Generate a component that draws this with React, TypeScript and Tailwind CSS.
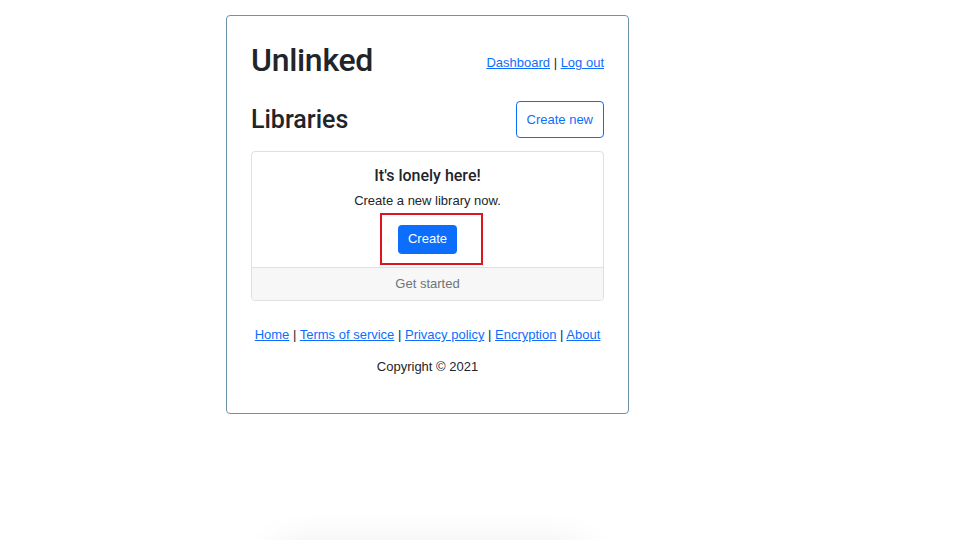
import React from 'react'

const footerLinks = ['Home', 'Terms of service', 'Privacy policy', 'Encryption', 'About']

const App = () => {
  return (
    <div className="min-h-[540px] w-full bg-white font-['Liberation_Sans',Arial,sans-serif] text-[#212529]">
      {/* main card */}
      <div className="ml-[226px] pt-[15px]">
        <div className="w-[403px] h-[399px] rounded-[4px] border border-[#6d93ac] px-6 pt-[24px]">
          {/* header */}
          <div className="flex items-center justify-between h-[40px]">
            <h1 className="font-['Roboto',sans-serif] text-[32px] leading-none font-medium tracking-[-0.3px]">Unlinked</h1>
            <p className="text-[13px] mt-[5px]">
              <a href="#" className="text-[#0d6efd] underline">Dashboard</a>
              {" | "}
              <a href="#" className="text-[#0d6efd] underline">Log out</a>
            </p>
          </div>

          {/* libraries */}
          <div className="flex items-center justify-between mt-[21px] h-[37px]">
            <h2 className="font-['Roboto',sans-serif] text-[25px] leading-none font-medium">Libraries</h2>
            <button className="h-[37px] px-[10px] rounded-[4px] border border-[#0d6efd] text-[#0d6efd] text-[13px]">
              Create new
            </button>
          </div>

          {/* empty state */}
          <div className="mt-[13px] rounded-[4px] border border-[#e0e0e0] overflow-hidden">
            <div className="flex flex-col items-center pt-[14px]">
              <h3 className="font-['Roboto',sans-serif] text-[16px] font-medium leading-5">It's lonely here!</h3>
              <p className="text-[13px] mt-[7px] leading-4">Create a new library now.</p>
              <div className="mt-[4px] mb-[2px] ml-[8px] w-[103px] h-[52px] border-2 border-[#e0141b] flex items-center pl-[16px]">
                <button className="w-[59px] h-[29px] rounded-[4px] bg-[#0d6efd] text-white text-[13px]">
                  Create
                </button>
              </div>
            </div>
            <div className="h-[33px] border-t border-[#e0e0e0] bg-[#f7f7f7] flex items-center justify-center text-[13px] text-[#6c757d]">
              Get started
            </div>
          </div>

          {/* footer */}
          <p className="mt-[26px] text-center text-[13px] leading-4">
            {footerLinks.map((link, i) => (
              <React.Fragment key={link}>
                {i > 0 && " | "}
                <a href="#" className="text-[#0d6efd] underline">{link}</a>
              </React.Fragment>
            ))}
          </p>
          <p className="mt-[16px] text-center text-[13px] leading-4">Copyright © 2021</p>
        </div>
      </div>

      {/* shadow of a panel just below the fold */}
      <div className="mt-[146px] ml-[280px] w-[300px] h-[40px] rounded-full bg-white shadow-[0_0_36px_18px_rgba(0,0,0,0.07)]" />
    </div>
  )
}

export default App
